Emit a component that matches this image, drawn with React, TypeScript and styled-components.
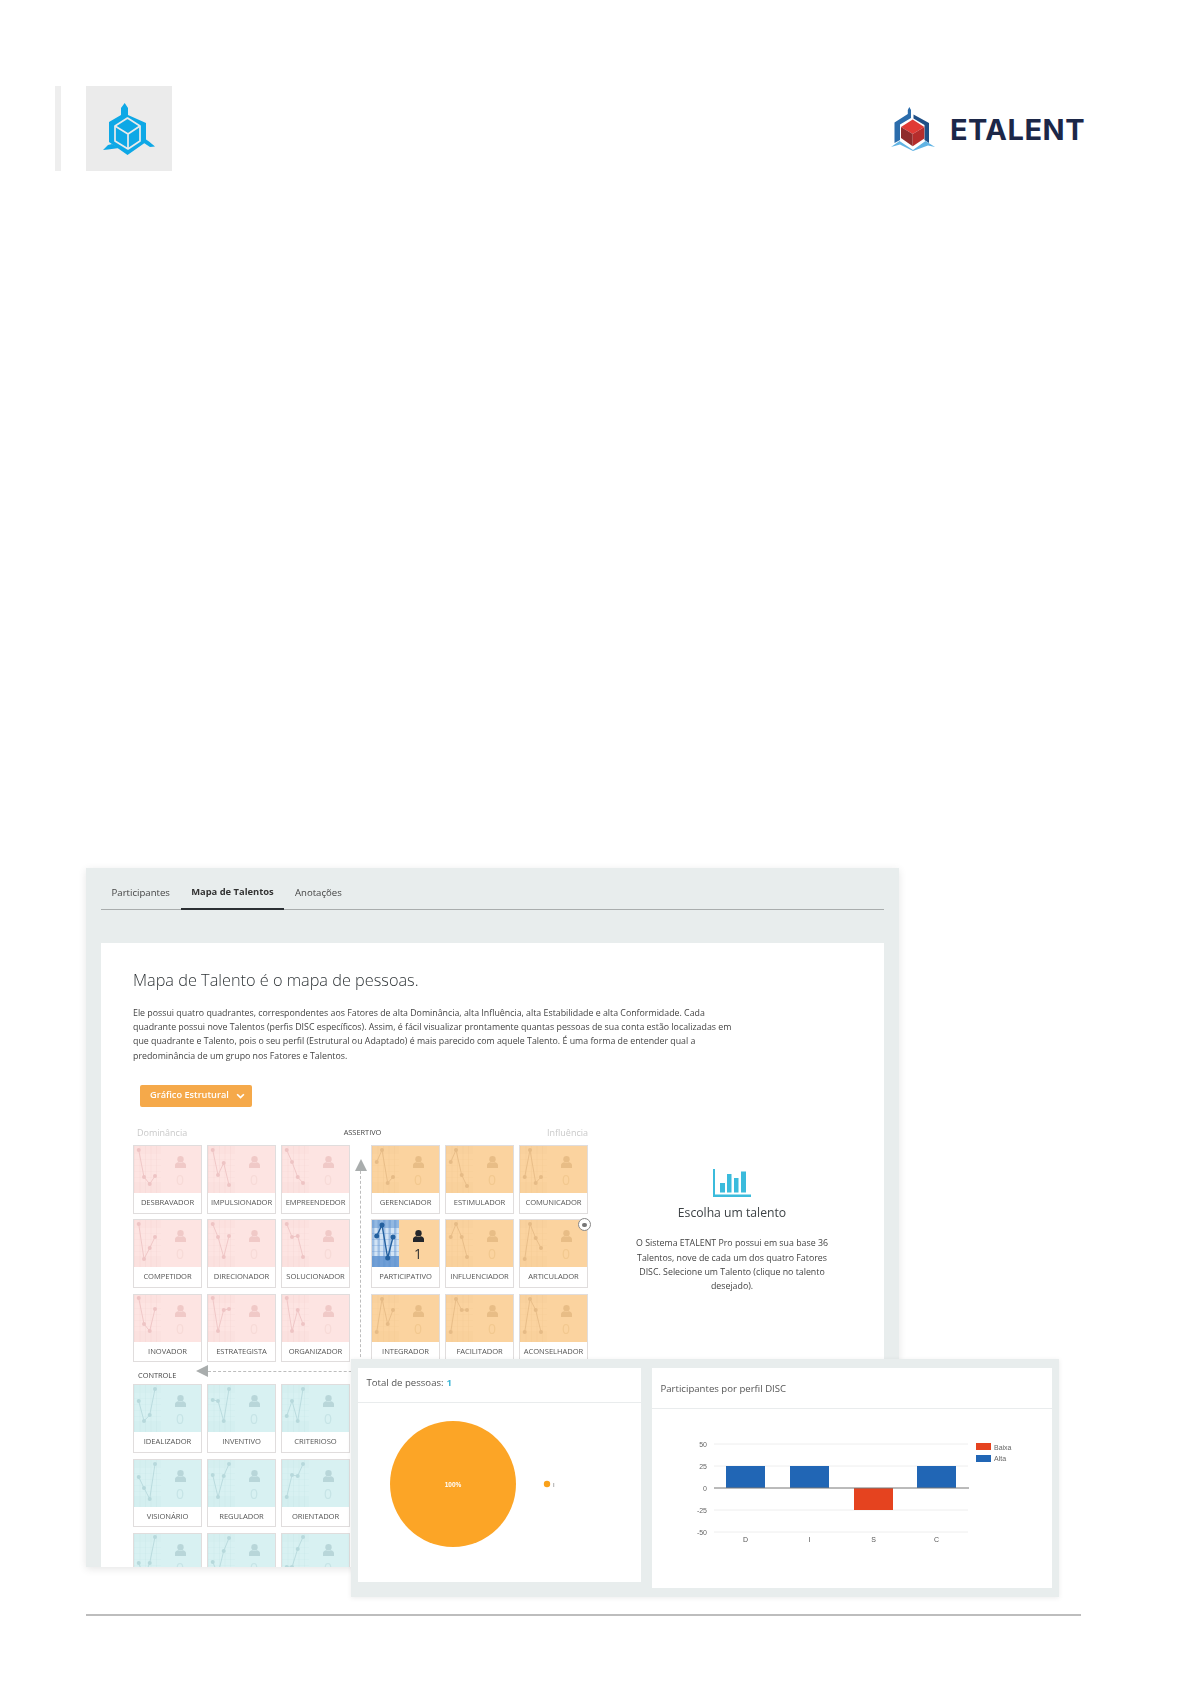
import React from "react";
import styled, { createGlobalStyle } from "styled-components";

const Global = createGlobalStyle`
  html, body { margin: 0; padding: 0; background: #fff; }
  body { font-family: "Open Sans", "Liberation Sans", sans-serif; color: #444; }
  #root { width: 1196px; height: 1692px; overflow: hidden; }
`;

type Tone = "pink" | "orange" | "blue";

const palette: Record<Tone, { bg: string; grid: string; line: string; person: string; zero: string }> = {
  pink: { bg: "#fde4e2", grid: "#f3cfce", line: "#eec4c4", person: "#f0c9c7", zero: "#f7dad7" },
  orange: { bg: "#fbd39f", grid: "#f0c690", line: "#e6bb86", person: "#e8bd86", zero: "#f2c88f" },
  blue: { bg: "#d8f1f2", grid: "#c3e3e6", line: "#b7d9dc", person: "#b8d6d9", zero: "#c6e4e6" },
};

const Header = styled.header`
  display: flex;
  align-items: center;
  justify-content: space-between;
  padding: 86px 111px 0 55px;
`;
const HeaderLeft = styled.div`
  display: flex;
  gap: 25px;
`;
const AccentBar = styled.div`
  width: 6px;
  height: 85px;
  background: #eeeeee;
`;
const IconBox = styled.div`
  width: 86px;
  height: 85px;
  background: #ebebeb;
  display: flex;
  align-items: center;
  justify-content: center;
`;
const Brand = styled.div`
  display: flex;
  align-items: center;
  gap: 15px;
`;
const BrandName = styled.span`
  font-family: "Inter", "Liberation Sans", sans-serif;
  font-weight: 700;
  font-size: 29px;
  line-height: 44px;
  letter-spacing: 0.5px;
  color: #1c2748;
  padding-top: 2px;
`;

const Stage = styled.section`
  position: relative;
  margin: 697px 0 0 86px;
  width: 995px;
  filter: blur(0.35px);
`;
const Window = styled.div`
  width: 813px;
  height: 699px;
  background: #e8eded;
  overflow: hidden;
  box-shadow: 0 2px 8px rgba(0, 0, 0, 0.1);
  padding: 0 15px;
  box-sizing: border-box;
`;
const Tabs = styled.nav`
  display: flex;
  height: 42px;
  border-bottom: 1px solid #a9adad;
  box-sizing: border-box;
`;
const Tab = styled.div<{ $active?: boolean }>`
  display: flex;
  align-items: center;
  height: 42px;
  box-sizing: border-box;
  padding: 6px 10.6px 0;
  font-size: ${(p) => (p.$active ? "9.4px" : "9.6px")};
  font-weight: ${(p) => (p.$active ? 700 : 400)};
  color: ${(p) => (p.$active ? "#333" : "#444")};
  border-bottom: ${(p) => (p.$active ? "2px solid #2b2f33" : "0")};
`;
const Panel = styled.div`
  margin-top: 33px;
  background: #fff;
  height: 660px;
  padding: 26px 0 0 32px;
  box-sizing: border-box;
`;
const Title = styled.h1`
  margin: 0;
  font-size: 16.3px;
  line-height: 22px;
  font-weight: 300;
  color: #2f3437;
`;
const Lead = styled.p`
  margin: 14.5px 0 0;
  font-size: 8.82px;
  line-height: 14.4px;
  color: #444;
  white-space: nowrap;
`;
const Dropdown = styled.button`
  display: flex;
  align-items: center;
  gap: 7px;
  margin: 22px 0 0 7px;
  padding: 0 10px 3px;
  width: 112px;
  height: 22px;
  box-sizing: border-box;
  border: 0;
  border-radius: 2px;
  background: #f5a94a;
  color: #fff;
  font: 600 9.2px "Open Sans", sans-serif;
  white-space: nowrap;
`;
const Chevron = styled.svg`
  margin-top: 3px;
  flex: none;
`;
const Content = styled.div`
  display: flex;
  margin-top: 18px;
`;
const MapArea = styled.div`
  width: 455px;
  flex: none;
`;
const MapHead = styled.div`
  display: grid;
  grid-template-columns: 1fr auto 1fr;
  align-items: center;
  height: 20px;
  box-sizing: border-box;
  padding: 0 0 6px 4px;
`;
const Faint = styled.span<{ $right?: boolean }>`
  font-size: 9px;
  color: #c9c9c9;
  text-align: ${(p) => (p.$right ? "right" : "left")};
`;
const AxisLabel = styled.span`
  font-size: 7.4px;
  color: #444;
`;
const QuadRow = styled.div`
  display: grid;
  grid-template-columns: 217px 21px 217px;
`;
const Quad = styled.div`
  display: grid;
  grid-template-columns: repeat(3, 1fr);
  grid-auto-rows: 68.5px;
  gap: 5.8px 5px;
`;
const VAxis = styled.div`
  display: flex;
  flex-direction: column;
  align-items: center;
  padding-top: 14px;
`;
const UpArrow = styled.div`
  width: 0;
  height: 0;
  border-left: 6px solid transparent;
  border-right: 6px solid transparent;
  border-bottom: 12px solid #a9adad;
`;
const VDash = styled.div`
  flex: 1;
  width: 0;
  border-left: 1px dashed #bdbdbd;
`;
const HAxis = styled.div`
  display: flex;
  align-items: flex-start;
  height: 22px;
  padding-left: 5px;
  box-sizing: border-box;
`;
const ControlLabel = styled(AxisLabel)`
  width: 58px;
  margin-top: 7px;
  line-height: 12px;
`;
const LeftArrow = styled.div`
  flex: none;
  margin-top: 3px;
  width: 0;
  height: 0;
  border-top: 6px solid transparent;
  border-bottom: 6px solid transparent;
  border-right: 12px solid #a9adad;
`;
const HDash = styled.div`
  flex: 1;
  margin-top: 9px;
  border-top: 1px dashed #bdbdbd;
`;
const Card = styled.div`
  position: relative;
  border: 1px solid #e0dddd;
  background: #fff;
  box-sizing: border-box;
`;
const CardTop = styled.div<{ $tone: Tone }>`
  display: flex;
  height: 47px;
  background: ${(p) => palette[p.$tone].bg};
`;
const Metric = styled.div`
  flex: 1;
  display: flex;
  flex-direction: column;
  align-items: center;
  padding-top: 10px;
  margin-left: -2px;
`;
const Count = styled.span<{ $color: string }>`
  font-size: 14px;
  line-height: 17px;
  margin-top: 3px;
  color: ${(p) => p.$color};
`;
const CardLabel = styled.div`
  height: 20px;
  line-height: 19px;
  text-align: center;
  font-size: 7.6px;
  color: #555;
  white-space: nowrap;
  letter-spacing: -0.05px;
`;
const Eye = styled.span`
  position: absolute;
  top: -2px;
  right: -4px;
  width: 13px;
  height: 13px;
  box-sizing: border-box;
  border: 1px solid #888;
  border-radius: 50%;
  background: #fff;
  display: flex;
  align-items: center;
  justify-content: center;
  &::after {
    content: "";
    width: 5px;
    height: 4px;
    border-radius: 2px;
    background: #777;
  }
`;
const Info = styled.aside`
  width: 200px;
  margin: 44px 0 0 44px;
  display: flex;
  flex-direction: column;
  align-items: center;
  text-align: center;
`;
const InfoTitle = styled.h2`
  margin: 6px 0 0;
  font-size: 12.2px;
  line-height: 20px;
  font-weight: 400;
  color: #3d4245;
`;
const InfoText = styled.p`
  margin: 13px 0 0;
  font-size: 8.82px;
  line-height: 14.4px;
  color: #444;
  white-space: nowrap;
`;

const ChartsDock = styled.div`
  position: absolute;
  left: 265px;
  top: 491px;
  width: 708px;
  height: 238px;
  box-sizing: border-box;
  background: #e8eded;
  box-shadow: 0 1px 5px rgba(0, 0, 0, 0.08);
  display: flex;
  align-items: flex-start;
  gap: 11px;
  padding: 9px 7px;
`;
const ChartCard = styled.div<{ $w: number; $h: number }>`
  width: ${(p) => p.$w}px;
  height: ${(p) => p.$h}px;
  flex: none;
  background: #fff;
`;
const ChartHead = styled.div<{ $h: number; $lift?: number; $heavy?: boolean }>`
  height: ${(p) => p.$h}px;
  box-sizing: border-box;
  border-bottom: 1px solid #e9eced;
  display: flex;
  align-items: center;
  padding: 0 0 ${(p) => p.$lift ?? 0}px 8.5px;
  font-size: 9.6px;
  font-weight: ${(p) => (p.$heavy ? 500 : 400)};
  color: #555;
`;
const Strong = styled.b`
  color: #3fb7d6;
  margin-left: 3px;
`;
const ChartSvg = styled.svg`
  display: block;
`;
const Rule = styled.hr`
  margin: 47px 0 0 86px;
  width: 995px;
  height: 2px;
  border: 0;
  background: #bdbdbd;
`;

const PX = [5.7, 11, 16.7, 22];

function Graph({ ys, tone, active }: { ys: number[]; tone: Tone; active?: boolean }) {
  const p = palette[tone];
  const pts = ys.map((y, i) => `${PX[i]},${y}`).join(" ");
  const gridColor = active ? "#5f93d0" : p.grid;
  const lineColor = active ? "#23609f" : p.line;
  return (
    <svg width="27" height="47" viewBox="1 1 27 47" style={{ flex: "none" }}>
      <rect width="28" height="48" fill={active ? "#d3e4f5" : p.bg} />
      {[0, 1, 2, 3, 4].map((i) => (
        <rect key={i} x={i * 5.5 + 1} width={active ? 2.4 : 1} height="48" fill={gridColor} opacity={active ? 0.45 : 0.28} />
      ))}
      <rect y="0" width="28" height="9" fill={gridColor} opacity={active ? 0.55 : 0.12} />
      <rect y="37" width="28" height="11" fill={gridColor} opacity={active ? 0.85 : 0.15} />
      {[14, 20, 26, 32].map((y) => (
        <rect key={y} y={y} width="28" height="1" fill={gridColor} opacity={active ? 0.3 : 0.15} />
      ))}
      <polyline points={pts} fill="none" stroke={lineColor} strokeWidth={active ? 1.4 : 0.9} />
      {ys.map((y, i) => (
        <circle key={i} cx={PX[i]} cy={y} r={active ? 2.5 : 2} fill={lineColor} />
      ))}
    </svg>
  );
}

function Person({ color }: { color: string }) {
  return (
    <svg width="11" height="12" viewBox="0 0 10 12" preserveAspectRatio="none">
      <ellipse cx="5" cy="3.2" rx="2.9" ry="3.2" fill={color} />
      <path d="M0 12V9.2C0 7.4 1.4 6.4 3 6.2c.6.5 1.3.8 2 .8s1.4-.3 2-.8c1.600.2 3 1.200 3 3V12z" fill={color} />
    </svg>
  );
}

type Item = { name: string; ys: number[]; count?: number; eye?: boolean };

const quads: { tone: Tone; items: Item[] }[] = [
  {
    tone: "pink",
    items: [
      { name: "DESBRAVADOR", ys: [5, 32, 39, 31] },
      { name: "IMPULSIONADOR", ys: [5, 30, 18, 40] },
      { name: "EMPREENDEDOR", ys: [5, 17, 32, 38] },
      { name: "COMPETIDOR", ys: [5, 40, 29, 18] },
      { name: "DIRECIONADOR", ys: [5, 18, 38, 17] },
      { name: "SOLUCIONADOR", ys: [5, 18, 17, 38] },
      { name: "INOVADOR", ys: [4, 30, 37, 15] },
      { name: "ESTRATEGISTA", ys: [4, 37, 16, 15] },
      { name: "ORGANIZADOR", ys: [4, 37, 16, 30] },
    ],
  },
  {
    tone: "orange",
    items: [
      { name: "GERENCIADOR", ys: [17, 5, 38, 32] },
      { name: "ESTIMULADOR", ys: [17, 5, 30, 41] },
      { name: "COMUNICADOR", ys: [32, 5, 38, 32] },
      { name: "PARTICIPATIVO", ys: [17, 6, 39, 18], count: 1 },
      { name: "INFLUENCIADOR", ys: [18, 5, 18, 38] },
      { name: "ARTICULADOR", ys: [40, 5, 19, 29], eye: true },
      { name: "INTEGRADOR", ys: [38, 5, 30, 16] },
      { name: "FACILITADOR", ys: [38, 5, 16, 16] },
      { name: "ACONSELHADOR", ys: [38, 5, 16, 38] },
    ],
  },
  {
    tone: "blue",
    items: [
      { name: "IDEALIZADOR", ys: [17, 37, 31, 5] },
      { name: "INVENTIVO", ys: [16, 17, 37, 5] },
      { name: "CRITERIOSO", ys: [32, 17, 37, 5] },
      { name: "VISIONÁRIO", ys: [18, 29, 40, 5] },
      { name: "REGULADOR", ys: [16, 38, 17, 5] },
      { name: "ORIENTADOR", ys: [38, 16, 17, 5] },
      { name: "ANALISTA", ys: [30, 44, 30, 4] },
      { name: "PLANEJADOR", ys: [29, 41, 18, 5] },
      { name: "PERFECCIONISTA", ys: [34, 34, 16, 4] },
    ],
  },
];

function Talent({ item, tone }: { item: Item; tone: Tone }) {
  const active = !!item.count;
  const p = palette[tone];
  return (
    <Card>
      <CardTop $tone={tone}>
        <Graph ys={item.ys} tone={tone} active={active} />
        <Metric>
          <Person color={active ? "#23262b" : p.person} />
          <Count $color={active ? "#333" : p.zero}>{item.count ?? 0}</Count>
        </Metric>
      </CardTop>
      <CardLabel>{item.name}</CardLabel>
      {item.eye && <Eye />}
    </Card>
  );
}

function Quadrant({ index }: { index: number }) {
  const q = quads[index];
  return (
    <Quad>
      {q.items.map((it) => (
        <Talent key={it.name} item={it} tone={q.tone} />
      ))}
    </Quad>
  );
}

function CubeMark() {
  return (
    <svg width="52" height="52" viewBox="0 0 52 52" fill="#0ea8e6">
      <path d="M18 12V5L21.700 0 25 5v7l18 8v19L24.500 52 6 39V19z" />
      <path d="M0 47l5-5 4-1 7 4-11 1.500zM52 43.500l-6-5-3-2-3.500 2.500 7.500 5z" />
      <g fill="none" stroke="#ebebeb" strokeWidth="1.700" strokeLinejoin="round">
        <path d="M24.500 15L12 23v15l13 8 12-8V23z" />
        <path d="M12 23l13 8 12-8M25 31v15" />
      </g>
    </svg>
  );
}

function BrandMark() {
  return (
    <svg width="44" height="44" viewBox="0 0 44 44">
      <path d="M16.800 7V3L18.300 0 20 3v8L9 17.500V33l-5.500 3V15.500z" fill="#2b6cab" />
      <path d="M22.500 7.500L38 16v20l-4.500-3V18l-11-6.500z" fill="#1f4f86" />
      <path d="M0 40l8.500-6L22 43l12.500-9 9.500 6-7-1.500L22 44 9 37.500z" fill="#62b4e4" />
      <path d="M21.700 12.500L10 20l11.700 7L33.300 20z" fill="#e03a35" />
      <path d="M10 20v11l11.700 8.300V27z" fill="#8e2c2c" />
      <path d="M33.300 20v11.500L21.700 39.300V27z" fill="#b52d2c" />
    </svg>
  );
}

function BarsIcon() {
  return (
    <svg width="38" height="28" viewBox="0 0 38 28" fill="#3bbbdc">
      <rect x="0" y="0" width="2" height="28" />
      <rect x="0" y="25.500" width="38" height="2.500" />
      <rect x="7" y="14" width="5" height="9.500" />
      <rect x="14" y="5" width="4.500" height="18.500" />
      <rect x="21" y="9" width="4.500" height="14.500" />
      <rect x="28" y="2.500" width="5" height="21" />
    </svg>
  );
}

function PieChart() {
  return (
    <ChartSvg width="283" height="178" viewBox="358 1404 283 178">
      <circle cx="453" cy="1485" r="63" fill="#fca526" />
      <text x="453" y="1488" textAnchor="middle" fontSize="6.500" fontWeight="700" fill="#fff" fontFamily="Liberation Sans">
        100%
      </text>
      <circle cx="547" cy="1485" r="3.200" fill="#f9a11b" />
      <text x="553" y="1487.500" fontSize="6" fill="#777" fontFamily="Liberation Sans">
        I
      </text>
    </ChartSvg>
  );
}

function DiscChart() {
  const grid = [1444, 1466, 1510, 1532];
  const ticks: [string, number][] = [["50", 1444], ["25", 1466], ["0", 1488], ["-25", 1510], ["-50", 1532]];
  const bars = [
    { x: 726, y: 1466, h: 22, c: "#2166b5", l: "D" },
    { x: 790, y: 1466, h: 22, c: "#2166b5", l: "I" },
    { x: 854, y: 1488, h: 22, c: "#e5431f", l: "S" },
    { x: 917, y: 1466, h: 22, c: "#2166b5", l: "C" },
  ];
  const font = "Liberation Sans";
  return (
    <ChartSvg width="400" height="179" viewBox="652 1409 400 179">
      {grid.map((y) => (
        <line key={y} x1="714" x2="968" y1={y} y2={y} stroke="#eeeeee" />
      ))}
      {ticks.map(([t, y]) => (
        <text key={t} x="707" y={y + 2.500} textAnchor="end" fontSize="7" fill="#666" fontFamily={font}>
          {t}
        </text>
      ))}
      {bars.map((b) => (
        <g key={b.l}>
          <rect x={b.x} y={b.y} width="39" height={b.h} fill={b.c} />
          <text x={b.x + 19.500} y="1542" textAnchor="middle" fontSize="7" fill="#555" fontFamily={font}>
            {b.l}
          </text>
        </g>
      ))}
      <line x1="714" x2="969" y1="1488" y2="1488" stroke="#777" />
      <rect x="976" y="1443" width="15" height="7" fill="#e5431f" />
      <text x="994" y="1449.500" fontSize="7" fill="#666" fontFamily={font}>Baixa</text>
      <rect x="976" y="1455" width="15" height="7" fill="#2166b5" />
      <text x="994" y="1461" fontSize="7" fill="#666" fontFamily={font}>Alta</text>
    </ChartSvg>
  );
}

export default function App() {
  return (
    <>
      <Global />
      <Header>
        <HeaderLeft>
          <AccentBar />
          <IconBox>
            <CubeMark />
          </IconBox>
        </HeaderLeft>
        <Brand>
          <BrandMark />
          <BrandName>ETALENT</BrandName>
        </Brand>
      </Header>
      <Stage>
        <Window>
          <Tabs>
            <Tab>Participantes</Tab>
            <Tab $active>Mapa de Talentos</Tab>
            <Tab>Anotações</Tab>
          </Tabs>
          <Panel>
            <Title>Mapa de Talento é o mapa de pessoas.</Title>
            <Lead>
              Ele possui quatro quadrantes, correspondentes aos Fatores de alta Dominância, alta Influência, alta Estabilidade e alta Conformidade. Cada
              <br />
              quadrante possui nove Talentos (perfis DISC específicos). Assim, é fácil visualizar prontamente quantas pessoas de sua conta estão localizadas em
              <br />
              que quadrante e Talento, pois o seu perfil (Estrutural ou Adaptado) é mais parecido com aquele Talento. É uma forma de entender qual a
              <br />
              predominância de um grupo nos Fatores e Talentos.
            </Lead>
            <Dropdown>
              Gráfico Estrutural
              <Chevron width="9" height="7" viewBox="0 0 8 6" fill="none" stroke="#fff" strokeWidth="1.500">
                <path d="M1 1l3 3 3-3" />
              </Chevron>
            </Dropdown>
            <Content>
              <MapArea>
                <MapHead>
                  <Faint>Dominância</Faint>
                  <AxisLabel>ASSERTIVO</AxisLabel>
                  <Faint $right>Influência</Faint>
                </MapHead>
                <QuadRow>
                  <Quadrant index={0} />
                  <VAxis>
                    <UpArrow />
                    <VDash />
                  </VAxis>
                  <Quadrant index={1} />
                </QuadRow>
                <HAxis>
                  <ControlLabel>CONTROLE</ControlLabel>
                  <LeftArrow />
                  <HDash />
                </HAxis>
                <QuadRow>
                  <Quadrant index={2} />
                </QuadRow>
              </MapArea>
              <Info>
                <BarsIcon />
                <InfoTitle>Escolha um talento</InfoTitle>
                <InfoText>
                  O Sistema ETALENT Pro possui em sua base 36
                  <br />
                  Talentos, nove de cada um dos quatro Fatores
                  <br />
                  DISC. Selecione um Talento (clique no talento
                  <br />
                  desejado).
                </InfoText>
              </Info>
            </Content>
          </Panel>
        </Window>
        <ChartsDock>
          <ChartCard $w={283} $h={214}>
            <ChartHead $h={35} $lift={5} $heavy>
              Total de pessoas:<Strong>1</Strong>
            </ChartHead>
            <PieChart />
          </ChartCard>
          <ChartCard $w={400} $h={220}>
            <ChartHead $h={41}>Participantes por perfil DISC</ChartHead>
            <DiscChart />
          </ChartCard>
        </ChartsDock>
      </Stage>
      <Rule />
    </>
  );
}
